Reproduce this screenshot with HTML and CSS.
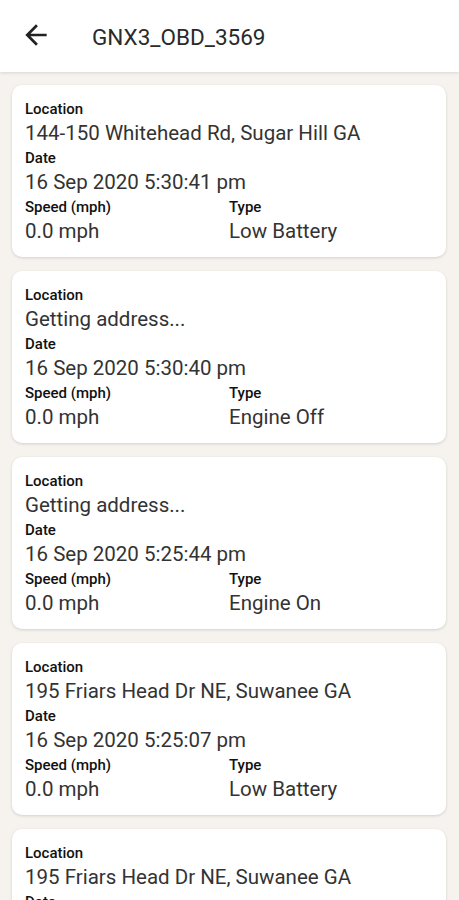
FILE: index.html
```html
<!DOCTYPE html>
<html lang="en">
<head>
    <meta charset="UTF-8">
    <meta name="viewport" content="width=device-width, initial-scale=1.0">
    <title>GNX3_OBD_3569</title>
    <link rel="stylesheet" href="styles.css">
</head>
<body>
    <header class="topbar">
        <svg class="back" viewBox="0 0 24 24" width="32" height="32">
            <path d="M20 11H7.83l5.59-5.59L12 4l-8 8 8 8 1.41-1.41L7.83 13H20v-2z" fill="#222"/>
        </svg>
        <h1>GNX3_OBD_3569</h1>
    </header>

    <div class="list">
        <div class="card">
            <div class="label">Location</div>
            <div class="value">144-150 Whitehead Rd, Sugar Hill GA</div>
            <div class="label">Date</div>
            <div class="value">16 Sep 2020 5:30:41 pm</div>
            <div class="row">
                <div class="col">
                    <div class="label">Speed (mph)</div>
                    <div class="value">0.0 mph</div>
                </div>
                <div class="col">
                    <div class="label">Type</div>
                    <div class="value">Low Battery</div>
                </div>
            </div>
        </div>

        <div class="card">
            <div class="label">Location</div>
            <div class="value">Getting address...</div>
            <div class="label">Date</div>
            <div class="value">16 Sep 2020 5:30:40 pm</div>
            <div class="row">
                <div class="col">
                    <div class="label">Speed (mph)</div>
                    <div class="value">0.0 mph</div>
                </div>
                <div class="col">
                    <div class="label">Type</div>
                    <div class="value">Engine Off</div>
                </div>
            </div>
        </div>

        <div class="card">
            <div class="label">Location</div>
            <div class="value">Getting address...</div>
            <div class="label">Date</div>
            <div class="value">16 Sep 2020 5:25:44 pm</div>
            <div class="row">
                <div class="col">
                    <div class="label">Speed (mph)</div>
                    <div class="value">0.0 mph</div>
                </div>
                <div class="col">
                    <div class="label">Type</div>
                    <div class="value">Engine On</div>
                </div>
            </div>
        </div>

        <div class="card">
            <div class="label">Location</div>
            <div class="value">195 Friars Head Dr NE, Suwanee GA</div>
            <div class="label">Date</div>
            <div class="value">16 Sep 2020 5:25:07 pm</div>
            <div class="row">
                <div class="col">
                    <div class="label">Speed (mph)</div>
                    <div class="value">0.0 mph</div>
                </div>
                <div class="col">
                    <div class="label">Type</div>
                    <div class="value">Low Battery</div>
                </div>
            </div>
        </div>

        <div class="card">
            <div class="label">Location</div>
            <div class="value">195 Friars Head Dr NE, Suwanee GA</div>
            <div class="label">Date</div>
            <div class="value">16 Sep 2020 5:25:07 pm</div>
            <div class="row">
                <div class="col">
                    <div class="label">Speed (mph)</div>
                    <div class="value">0.0 mph</div>
                </div>
                <div class="col">
                    <div class="label">Type</div>
                    <div class="value">Low Battery</div>
                </div>
            </div>
        </div>
    </div>
</body>
</html>
```

FILE: styles.css
```css
body {
    margin: 0;
    font-family: Roboto, "Noto Sans", sans-serif;
    background-color: #f6f3ef;
    color: #333;
    height: 900px;
    overflow: hidden;
}
.topbar {
    display: flex;
    align-items: center;
    height: 72px;
    padding: 0 0 2px 20px;
    box-sizing: border-box;
    background-color: #fff;
    box-shadow: 0 1px 3px rgba(0,0,0,0.12);
    position: relative;
}
.back {
    margin-right: 40px;
}
.topbar h1 {
    margin: 4px 0 0;
    font-size: 22.5px;
    font-weight: 400;
    color: #2a2a2a;
}
.list {
    display: flex;
    flex-direction: column;
    gap: 14px;
    padding: 13px 13px 0 12px;
}
.card {
    background-color: #fff;
    border-radius: 10px;
    padding: 14px 13px 11px 13px;
    box-shadow: 0 1px 3px rgba(0,0,0,0.15);
}
.label {
    font-size: 15px;
    font-weight: 500;
    line-height: 20px;
    color: #111;
}
.value {
    font-size: 20.5px;
    line-height: 29px;
    color: #333;
    white-space: nowrap;
}
.row {
    display: flex;
}
.col {
    width: 204px;
}
```
